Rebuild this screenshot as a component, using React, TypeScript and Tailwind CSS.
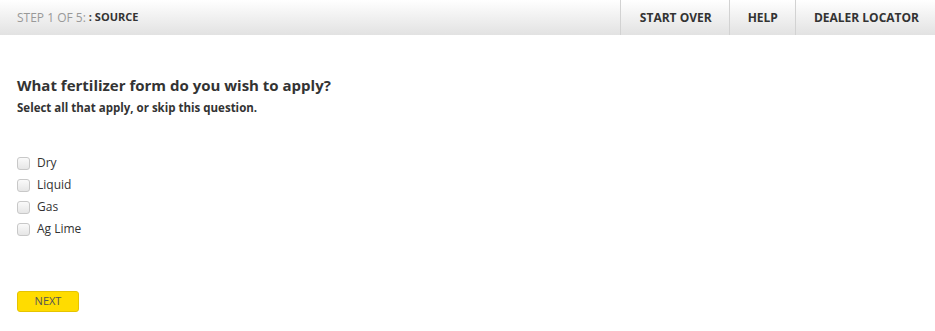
export default function App() {
  const options = ['Dry', 'Liquid', 'Gas', 'Ag Lime'];
  return (
    <div className="min-h-screen bg-white text-[#333]" style={{ fontFamily: '"Open Sans", "Noto Sans", sans-serif' }}>
      <header className="flex h-[35px] items-stretch justify-between bg-gradient-to-b from-white to-[#e2e2e2]">
        <div className="flex items-center pl-[17px] text-[12px]">
          <span className="text-[#999]">STEP 1 OF 5:</span>
          <span className="ml-[3px] text-[11px] font-bold text-[#333]">: SOURCE</span>
        </div>
        <nav className="flex items-stretch text-[12px] font-bold">
          <a className="flex items-center border-l border-[#d2d2d2] pl-[19px] pr-[17px]">START OVER</a>
          <a className="flex items-center border-l border-[#d2d2d2] pl-[18px] pr-[17px]">HELP</a>
          <a className="flex items-center border-l border-[#d2d2d2] pl-[18px] pr-[16px]">DEALER LOCATOR</a>
        </nav>
      </header>

      <main className="px-[17px]">
        <h1 className="mt-[40px] text-[15px] font-bold leading-5">What fertilizer form do you wish to apply?</h1>
        <p className="mt-[5px] text-[11.5px] font-bold leading-4">Select all that apply, or skip this question.</p>

        <div className="mt-[36px] flex flex-col">
          {options.map((o) => (
            <label key={o} className="flex h-[22px] items-center gap-[7px] text-[12px]">
              <span className="h-[13px] w-[13px] rounded-[3px] border border-[#c8c8c8] bg-gradient-to-b from-[#fafafa] to-[#e6e6e6]" />
              <span>{o}</span>
            </label>
          ))}
        </div>

        <button className="mt-[51px] flex h-[21px] w-[62px] items-center justify-center rounded-[3px] border border-[#e6c400] bg-[#ffdc00] text-[11px] text-[#555]">
          NEXT
        </button>
      </main>
    </div>
  );
}
